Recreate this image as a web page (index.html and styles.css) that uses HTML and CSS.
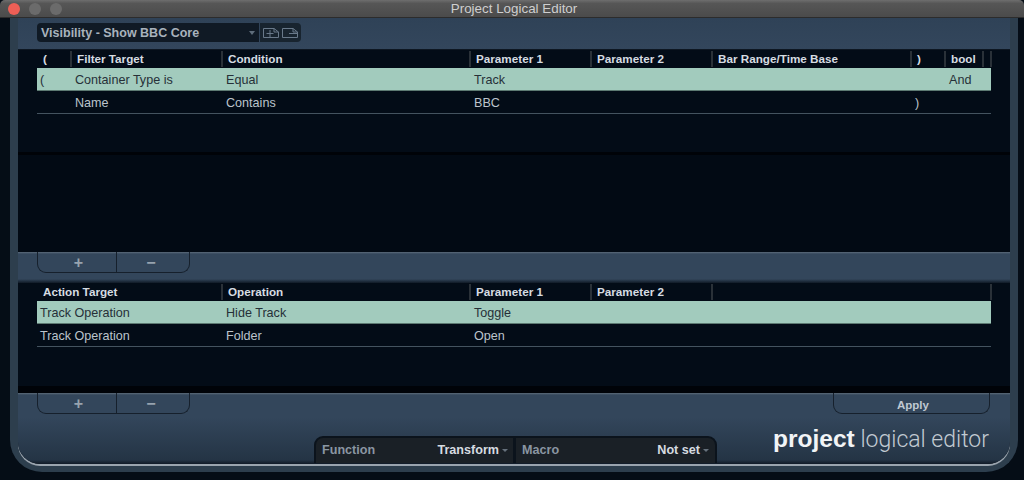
FILE: index.html
```html
<!DOCTYPE html>
<html lang="en">
<head>
    <meta charset="UTF-8">
    <meta name="viewport" content="width=device-width, initial-scale=1.0">
    <title>Project Logical Editor</title>
    <link rel="stylesheet" href="styles.css">
</head>
<body>
    <div class="titlebar">
        <div class="lights">
            <span class="light red"></span>
            <span class="light"></span>
            <span class="light"></span>
        </div>
        <div class="title">Project Logical Editor</div>
    </div>

    <div class="stage">
        <div class="frame">
            <div class="inner">
                <div class="toolbar">
                    <div class="preset">
                        <span class="preset-name">Visibility - Show BBC Core</span>
                        <span class="caret"></span>
                    </div>
                    <div class="preset-icons">
                        <svg width="18" height="12" viewBox="0 0 18 12" fill="none" stroke="#69798a">
                            <path d="M1.5 1.5H12L16.5 5V10.5H1.5Z"/>
                            <path d="M8 3V10M4.5 6.5H11.5"/>
                            <path d="M12 1.5V5H16.5"/>
                        </svg>
                        <svg width="18" height="12" viewBox="0 0 18 12" fill="none" stroke="#69798a">
                            <path d="M1.5 1.5H12L16.5 5V10.5H1.5Z"/>
                            <path d="M8 6.5H16"/>
                            <path d="M12 1.5V5H16.5"/>
                        </svg>
                    </div>
                </div>

                <!-- filter conditions -->
                <div class="table filter-table">
                    <div class="row head">
                        <span>(</span><span>Filter Target</span><span>Condition</span><span>Parameter 1</span><span>Parameter 2</span><span>Bar Range/Time Base</span><span>)</span><span>bool</span><span></span>
                    </div>
                    <div class="row selected">
                        <span>(</span><span>Container Type is</span><span>Equal</span><span>Track</span><span></span><span></span><span></span><span>And</span><span></span>
                    </div>
                    <div class="row">
                        <span></span><span>Name</span><span>Contains</span><span>BBC</span><span></span><span></span><span>)</span><span></span><span></span>
                    </div>
                </div>

                <div class="band">
                    <div class="tab add-remove">
                        <span class="tab-btn">+</span>
                        <span class="tab-btn">&minus;</span>
                    </div>
                </div>

                <!-- actions -->
                <div class="table action-table">
                    <div class="row head">
                        <span>Action Target</span><span>Operation</span><span>Parameter 1</span><span>Parameter 2</span><span></span>
                    </div>
                    <div class="row selected">
                        <span>Track Operation</span><span>Hide Track</span><span>Toggle</span><span></span><span></span>
                    </div>
                    <div class="row">
                        <span>Track Operation</span><span>Folder</span><span>Open</span><span></span><span></span>
                    </div>
                </div>

                <div class="footer">
                    <div class="footer-tabs">
                        <div class="tab add-remove">
                            <span class="tab-btn">+</span>
                            <span class="tab-btn">&minus;</span>
                        </div>
                        <div class="tab apply">Apply</div>
                    </div>
                    <div class="footer-bottom">
                        <div class="selectors">
                            <div class="selector function">
                                <span class="sel-label">Function</span>
                                <span class="sel-value">Transform</span>
                                <span class="caret small"></span>
                            </div>
                            <div class="selector macro">
                                <span class="sel-label">Macro</span>
                                <span class="sel-value">Not set</span>
                                <span class="caret small"></span>
                            </div>
                        </div>
                        <div class="logo"><b>project</b> logical editor</div>
                    </div>
                </div>
            </div>
        </div>
    </div>
</body>
</html>
```

FILE: styles.css
```css
* {
    box-sizing: border-box;
}
html, body {
    margin: 0;
    height: 480px;
    overflow: hidden;
}
body {
    background-color: #050d16;
    font-family: "Liberation Sans", Arial, sans-serif;
    color: #c4ccd4;
}

/* title bar */
.titlebar {
    height: 18px;
    display: flex;
    align-items: center;
    background: linear-gradient(#6e6e6e, #565656 20%, #4b4b4b);
    border-bottom: 1px solid #2c2c2c;
    border-radius: 5px 5px 0 0;
}
.lights {
    display: flex;
    gap: 9px;
    padding-left: 8px;
}
.light {
    width: 12px;
    height: 12px;
    border-radius: 50%;
    background-color: #6b6b6b;
}
.light.red {
    background-color: #ee5f56;
}
.title {
    flex: 1;
    text-align: center;
    font-size: 13.4px;
    color: #cfcfcf;
    margin-left: -58px;
}

/* outer frame */
.stage {
    height: 462px;
    padding: 0 6px 0 10px;
}
.frame {
    height: 454px;
    border: 8px solid #2d3e4d;
    border-top: none;
    border-radius: 0 0 32px 32px;
    box-shadow: inset 0 -2px 0 #46535f;
}
.inner {
    height: 446px;
    display: flex;
    flex-direction: column;
    background-color: #020a14;
    border-radius: 0 0 22px 22px;
    overflow: hidden;
    box-shadow: 0 2px 0 #9aa4ae;
}

/* top toolbar */
.toolbar {
    height: 32px;
    padding: 5px 19px 0;
    display: flex;
    background: linear-gradient(#2f4257, #33465c);
    border-bottom: 1px solid #0e1722;
}
.preset {
    width: 222px;
    height: 19px;
    display: flex;
    align-items: center;
    justify-content: space-between;
    padding: 0 4px;
    background-color: #101a25;
    border-radius: 4px 0 0 4px;
}
.preset-name {
    font-size: 12.5px;
    font-weight: bold;
    color: #a8b2bc;
}
.caret {
    width: 0;
    height: 0;
    border-left: 3px solid transparent;
    border-right: 3px solid transparent;
    border-top: 4px solid #5f6d7b;
}
.caret.small {
    margin: 1px 0 0 3px;
    border-top: 3px solid #66717c;
}
.preset-icons {
    width: 41px;
    height: 19px;
    margin-left: 1px;
    display: flex;
    align-items: center;
    justify-content: center;
    gap: 1px;
    background-color: #18242f;
    border-radius: 0 4px 4px 0;
}

/* tables */
.table {
    padding: 0 19px;
}
.filter-table {
    height: 202px;
    background: linear-gradient(#030c17 102px, #000308 102px, #000308 105px, #020a14 105px);
}
.action-table {
    height: 110px;
    background: linear-gradient(#030c17 103px, #000308 103px);
}
.row {
    display: grid;
    height: 23px;
    align-items: center;
    padding-top: 1px;
    font-size: 12.6px;
    color: #bcc4cc;
    border-bottom: 1px solid #44535f;
}
.filter-table .row {
    grid-template-columns: 34px 151px 248px 121px 121px 199px 34px 38px 8px;
}
.action-table .row {
    grid-template-columns: 185px 248px 121px 121px 279px;
}
.row span {
    padding-left: 4px;
}
.row span:first-child {
    padding-left: 3px;
}
.row.selected {
    background-color: #a2cbbd;
    color: #263038;
    border-bottom-color: #5d7a72;
}
.row.head {
    height: 18px;
    padding-top: 0;
    padding-left: 1px;
    align-items: stretch;
    border-bottom: none;
    font-size: 11.7px;
    font-weight: bold;
    color: #d6dce2;
}
.row.head span {
    padding-left: 5px;
    border-right: 2px solid #2a3138;
    margin: 1px 0;
    line-height: 16px;
}

/* bands with tabs */
.band {
    height: 31px;
    padding: 0 19px;
    background: linear-gradient(#5c6b7a, #33465b 2px, #33465b 27px, #101a26);
}
.tab {
    height: 21px;
    display: flex;
    align-items: center;
    border: 1px solid #16202c;
    border-top: none;
    border-radius: 0 0 9px 9px;
}
.add-remove {
    width: 153px;
}
.tab-btn {
    flex: 1;
    height: 100%;
    padding: 1px 4px 0 0;
    text-align: center;
    font-size: 16px;
    line-height: 20px;
    font-weight: bold;
    color: #97a3af;
}
.tab-btn:first-child {
    flex: none;
    width: 79px;
    padding: 1px 0 0 3px;
    border-right: 1px solid #16202c;
}
.apply {
    width: 157px;
    justify-content: center;
    padding: 3px 0 0 3px;
    font-size: 11.5px;
    font-weight: bold;
    color: #c0c9d2;
}

/* footer */
.footer {
    flex: 1;
    display: flex;
    flex-direction: column;
    padding: 0 19px;
    background: linear-gradient(#5c6b7a, #33465b 2px, #33465b 24px, #243445 67px, #101a26);
}
.footer-tabs {
    display: flex;
    justify-content: space-between;
    padding-right: 1px;
}
.footer-bottom {
    display: flex;
    justify-content: space-between;
    padding: 22px 2px 0 277px;
}
.selectors {
    display: flex;
    height: 27px;
    padding: 2px 2px 0;
    gap: 3px;
    background-color: #0b131c;
    border-radius: 9px 9px 0 0;
}
.selector {
    display: flex;
    align-items: center;
    padding: 0 6px 2px 6px;
    background-color: #1a2026;
    font-size: 12.6px;
    font-weight: bold;
}
.selector.function {
    width: 197px;
    padding-right: 5px;
    border-top-left-radius: 7px;
}
.selector.macro {
    width: 199px;
    border-top-right-radius: 7px;
}
.sel-label {
    flex: 1;
    color: #8a96a2;
}
.sel-value {
    color: #d6dbe0;
}
.logo {
    margin-top: -11px;
    font-family: Roboto, "Liberation Sans", sans-serif;
    font-size: 23px;
    font-weight: 300;
    color: #c2cad2;
    white-space: nowrap;
}
.logo b {
    font-family: "Liberation Sans", Arial, sans-serif;
    font-size: 24.5px;
    font-weight: bold;
    color: #f2f4f6;
}
```
